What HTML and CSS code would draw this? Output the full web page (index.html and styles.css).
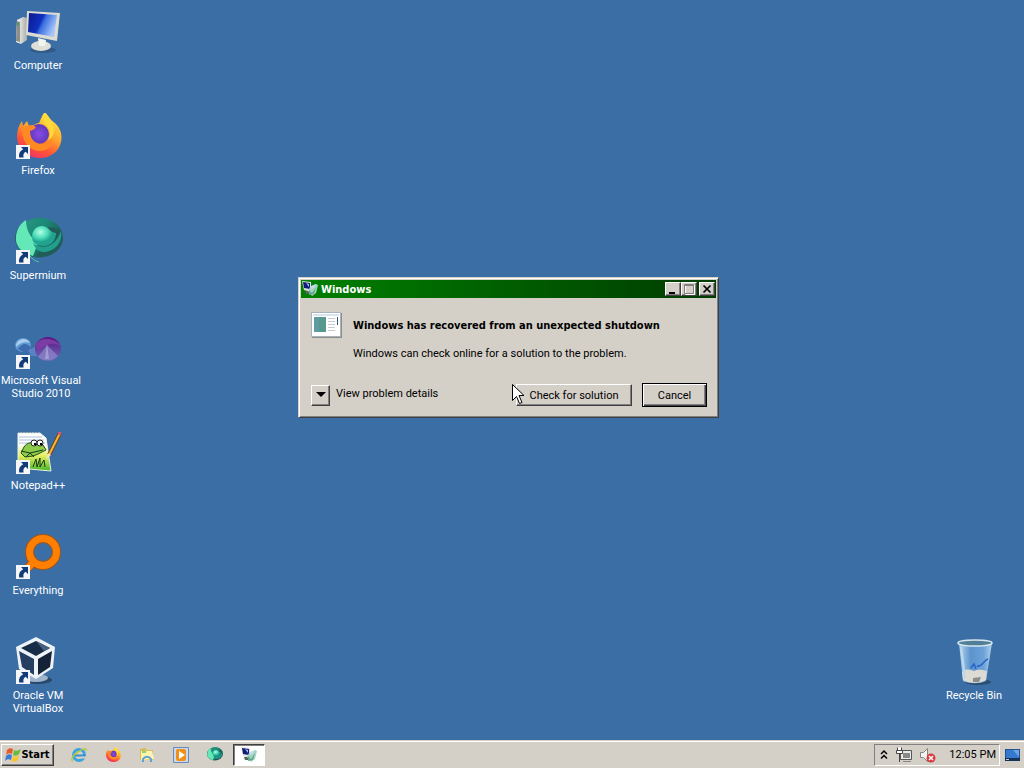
FILE: index.html
```html
<!DOCTYPE html>
<html lang="en">
<head>
<meta charset="utf-8">
<title>Desktop</title>
<link rel="stylesheet" href="styles.css">
</head>
<body>
<svg class="defs" aria-hidden="true">
  <defs>
    <linearGradient id="screen" x1="0" y1="0" x2="1" y2="0.4"><stop offset="0" stop-color="#0a1a8a"/><stop offset=".5" stop-color="#1030c0"/><stop offset=".6" stop-color="#3a6ee0"/><stop offset="1" stop-color="#a4c4f8"/></linearGradient>
    <linearGradient id="metal" x1="0" y1="0" x2="1" y2="0"><stop offset="0" stop-color="#fff"/><stop offset="1" stop-color="#a9aca6"/></linearGradient>
    <linearGradient id="flame" x1=".8" y1="0" x2=".3" y2="1"><stop offset="0" stop-color="#fff04a"/><stop offset=".45" stop-color="#ffa42c"/><stop offset=".75" stop-color="#ff5338"/><stop offset="1" stop-color="#f0306a"/></linearGradient>
    <radialGradient id="violet"><stop offset="0" stop-color="#8a4ae8"/><stop offset="1" stop-color="#5e3ab8"/></radialGradient>
    <linearGradient id="teal" x1="0" y1="0" x2="1" y2=".7"><stop offset="0" stop-color="#2c9c80"/><stop offset=".5" stop-color="#1c8878"/><stop offset="1" stop-color="#1c4a4a"/></linearGradient>
    <radialGradient id="mint" cx=".35" cy=".3"><stop offset="0" stop-color="#b4ffe4"/><stop offset=".6" stop-color="#4cdcb8"/><stop offset="1" stop-color="#20a490"/></radialGradient>
    <linearGradient id="purple" x1="0" y1="0" x2="0" y2="1"><stop offset="0" stop-color="#5c1484"/><stop offset="1" stop-color="#6c6cb8"/></linearGradient>
    <linearGradient id="paper" x1="0" y1="0" x2="0" y2="1"><stop offset=".3" stop-color="#fff"/><stop offset=".6" stop-color="#e4ee60"/><stop offset="1" stop-color="#46b828"/></linearGradient>
    <linearGradient id="glass" x1="0" y1="0" x2="1" y2="0"><stop offset="0" stop-color="#b8d8f0"/><stop offset=".35" stop-color="#5c94cc"/><stop offset=".75" stop-color="#6ca2d8"/><stop offset="1" stop-color="#b4d0e8"/></linearGradient>
    <symbol id="shortcut" viewBox="0 0 14 14"><path fill="#f4f6fa" d="M0 0h14v14H0z"/><path fill="#123c78" d="M5 2h7v7L9.700 6.800C7.500 8 7 9.500 7.600 12.600H3.200C2.400 8.800 3.900 6 7.200 4.300z"/></symbol>
    <symbol id="firefox" viewBox="0 0 48 48"><path fill="url(#flame)" d="M31-1c2 3 4 5 6 8 8 5 12 13 10 22-2 10-11 16-21 16C13 45 3 36 3 23 3 17 5 12 8 8l1 5 4-5 2 5 5-1c1-1 3-2 5-2 2-4 3-8 6-11z"/><circle cx="25" cy="21" r="10" fill="url(#violet)"/><path fill="#ff8a24" d="M8 16c4-4 9-5 14-2-1 2-3 3-6 4 0 8 5 13 12 13 5 0 8-3 10-7 1 9-4 14-12 14C15 38 8 28 8 16z"/><path fill="#ffd93c" d="M31-1c-4 5-3 9 1 13 5 5 5 11 2 15 6-2 8-10 3-20z"/></symbol>
    <symbol id="supermium" viewBox="0 0 48 40"><ellipse cx="24" cy="20" rx="24" ry="19.500" fill="#225c58"/><path fill="url(#teal)" d="M1 17C3 6 13 0 25 0c11 0 20 6 22 15-4-5-10-7-16-5-8 3-11 9-8 17 1 4 1 8-2 12C8 38-1 29 1 17z"/><path fill="#64e8b8" d="M1 19C2 10 6 5 11 2c0 8 3 17 12 23l-5 13C8 35 0 29 1 19z"/><path fill="#20a08c" d="M18 25c10 8 23 3 28-12 2 11-6 21-18 21-5 0-8-4-10-9z"/><path fill="url(#mint)" d="M17 19c0-8 7-13 14-10 4 2 4 5 10 6 0 8-6 13-12 13-7 0-12-3-12-9z"/></symbol>
    <symbol id="recovery" viewBox="0 0 16 16"><path fill="#e2e2dc" d="M0 0l9 1v10L2 9z"/><path fill="#101c78" d="M1 1l7 1v6L2 7z"/><path fill="#a8c0f0" d="M4 2l3 1v3z"/><path fill="#58625c" d="M3 10h6v3H4z"/><path fill="#a4d4c0" d="M8 6l6-3 2 1-2 8-4 3-4-5z"/><path fill="#60a88c" d="M7 9l3 3 4-6-2 7-5 1z"/><path fill="#c4dcec" d="M9 5l5-2-2 4-3 1z"/></symbol>
  </defs>
</svg>

<main class="desktop">
  <nav class="icons" aria-label="Desktop icons">
    <a class="icon" href="#computer">
      <svg class="art" viewBox="0 0 48 48"><path fill="url(#metal)" d="M3 12l6-3 4 1v22l-6 4-5-2z"/><path fill="#8c9088" d="M3 13l3 1v20l-4-1z"/><path fill="#3ea040" d="M3 15h2v2H3z"/><ellipse cx="29" cy="42" rx="13" ry="3" fill="#2b4e72" opacity=".6"/><ellipse cx="27" cy="38" rx="10" ry="5" fill="#dedfd8"/><path fill="#f4f4ee" d="M24 30l8 2-1 6h-6z"/><path fill="#dcdcd4" d="M13 3l33 2-3 28-31-6z"/><path fill="url(#screen)" d="M15 5l28 2-3 22-26-5z"/></svg>
      <span>Computer</span>
    </a>
    <a class="icon" href="#firefox">
      <svg class="art" viewBox="0 0 48 48"><use href="#firefox" width="48" height="48"/><use href="#shortcut" x="2" y="32" width="14" height="14"/></svg>
      <span>Firefox</span>
    </a>
    <a class="icon" href="#supermium">
      <svg class="art" viewBox="0 0 48 48"><use href="#supermium" x="1" y="0" width="48" height="40"/><path fill="none" stroke="#50c8a8" d="M16 38c2 3 5 5 9 6"/><use href="#shortcut" x="2" y="32" width="14" height="14"/></svg>
      <span>Supermium</span>
    </a>
    <a class="icon" href="#visual-studio">
      <svg class="art" viewBox="0 0 48 48"><ellipse cx="9" cy="22" rx="8" ry="7" fill="#5c9ad4"/><path fill="#a8ccec" d="M2 22c2-7 11-8 14-2-5-2-10 0-14 4z"/><path fill="#3c6cae" d="M4 26c4-6 9-7 13-1l-4 6z"/><path fill="#5c80c4" d="M14 27l9-4 4-5 3 14-7 1-6 0z"/><ellipse cx="34" cy="26" rx="13" ry="12" fill="url(#purple)"/><path fill="#7c3ca4" d="M21 22c6-8 18-8 26 1-8-4-15-3-22 5z"/><path fill="#8c84c8" d="M24 34l9-12 11 11c-5 5-14 6-20 1z" opacity=".75"/><path fill="#a49cd4" d="M33 21l2 15h-4z"/><use href="#shortcut" x="2" y="32" width="14" height="14"/></svg>
      <span class="long">Microsoft Visual Studio 2010</span>
    </a>
    <a class="icon" href="#notepad">
      <svg class="art" viewBox="0 0 48 48"><path fill="url(#paper)" stroke="#e9f2e4" d="M4 5h22l6 5 5 33-33-3z"/><path stroke="#52646e" stroke-dasharray="1 2" d="M5 4h21"/><path stroke="#adc0dc" d="M5 9h23M5 12h25M5 15h26"/><path fill="#8ccc48" stroke="#244c18" d="M10 19c3-5 9-5 12-3l7 1 3 5-8 4-5 2-8 1-4-4z"/><circle cx="20" cy="15" r="3" fill="#fff" stroke="#222"/><circle cx="26" cy="15" r="3" fill="#fff" stroke="#222"/><path d="M20 15h2v2h-2zM26 15h2v2h-2z"/><path stroke="#17361a" fill="none" d="M7 23l9 2 13-3M12 29l4-4 4 4M19 39l3-8 1 8 3-9v9l4-7 1 7"/><path stroke="#75441e" stroke-width="4" d="M46 5L35 27"/><path stroke="#f8b830" stroke-width="2" d="M46 5L35 27"/><path fill="#f5e2bd" d="M34 25l3 2-5 5z"/><path stroke="#d65d72" stroke-width="3" d="M46 4l-1 3"/><use href="#shortcut" x="2" y="32" width="14" height="14"/></svg>
      <span>Notepad++</span>
    </a>
    <a class="icon" href="#everything">
      <svg class="art" viewBox="0 0 48 48"><path stroke="#a85616" stroke-width="9" d="M20 28l-6 7"/><circle cx="29" cy="19" r="13.500" fill="none" stroke="#a0541c" stroke-width="9"/><path stroke="#ff8000" stroke-width="7" d="M21 27l-7 8"/><circle cx="29" cy="19" r="13.500" fill="none" stroke="#ff8000" stroke-width="7"/><use href="#shortcut" x="2" y="32" width="14" height="14"/></svg>
      <span>Everything</span>
    </a>
    <a class="icon" href="#virtualbox">
      <svg class="art" viewBox="0 0 48 48"><ellipse cx="24" cy="42" rx="14" ry="4" fill="#28486c"/><ellipse cx="22" cy="40" rx="12" ry="4" fill="#9eb4ca"/><path fill="#eef3f8" d="M22-1l19 10-2 21-17 11L5 31 2 9z"/><path fill="#182c48" d="M22 3l14 7-14 8L7 10z"/><path fill="#263e60" d="M5 13l15 8v16L8 29z"/><path fill="#142238" d="M38 13l-14 8v16l12-8z"/><path fill="#46607e" d="M22 3l14 7-6 3z"/><use href="#shortcut" x="2" y="32" width="14" height="14"/></svg>
      <span>Oracle VM VirtualBox</span>
    </a>
  </nav>

  <a class="icon" href="#recycle-bin">
    <svg class="art" viewBox="1 0 48 48"><ellipse cx="29" cy="44" rx="13" ry="3" fill="#2b4e72"/><path fill="url(#glass)" d="M10 5h33l-6 38c-6 3-17 3-23 0z"/><path fill="#dcdad4" d="M13 34c5-4 9-2 12-1 4-2 8-1 13 0l-1 9c-6 4-17 4-23 0z"/><path fill="#8c8c88" d="M24 40l8-1-2 5h-6z"/><path fill="none" stroke="#2562c8" stroke-width="1.500" d="M28 28c4 2 7-6 11-7M22 30l3-4 2 5"/><path stroke="#bcd8ee" stroke-width="2" d="M12 9l4 31"/><ellipse cx="26" cy="5" rx="17" ry="3" fill="#527e98" stroke="#d4e6ee" stroke-width="1.500"/></svg>
    <span>Recycle Bin</span>
  </a>

  <section class="dialog" role="dialog" aria-labelledby="dialog-title">
    <header class="titlebar">
      <svg class="small" viewBox="0 0 16 16"><use href="#recovery" width="16" height="16"/></svg>
      <h1 id="dialog-title">Windows</h1>
      <div class="controls">
        <button class="control" aria-label="Minimize"><svg viewBox="0 0 14 12"><path d="M3 9h6v2H3z"/></svg></button>
        <button class="control" aria-label="Maximize" disabled><svg viewBox="0 0 14 12"><path fill="none" stroke="#fff" d="M3.500 2.500h9v9h-9z"/><path fill="none" stroke="#808080" d="M2.500 1.500h9v9h-9zM2 2.500h10"/></svg></button>
        <button class="control close" aria-label="Close"><svg viewBox="0 0 14 12"><path fill="none" stroke="#000" stroke-width="1.700" d="M3.500 2.500l7 7M10.500 2.500l-7 7"/></svg></button>
      </div>
    </header>
    <div class="message">
      <svg class="program" viewBox="0 0 31 26"><path fill="#8c8c88" d="M1 1h30v25H1z"/><path fill="#fff" stroke="#a9b4bd" d="M.5.5h29v24H.5z"/><path fill="#d8e4ec" d="M2 2h26v2H2z"/><path fill="#559a8c" d="M3 5h12v15H3z"/><path fill="#6c9cba" d="M3 5h5v15H3z" opacity=".5"/><path stroke="#c5ccd4" d="M17 6.500h7M17 9.500h7M17 12.500h7M17 15.500h7M17 18.500h7"/><path fill="#2e5978" d="M26 5h1v8h-1z"/></svg>
      <div>
        <h2>Windows has recovered from an unexpected shutdown</h2>
        <p>Windows can check online for a solution to the problem.</p>
      </div>
    </div>
    <footer class="actions">
      <button class="button expand" id="details"><svg viewBox="0 0 10 6"><path d="M0 0h10L5 5z"/></svg></button>
      <label for="details">View problem details</label>
      <button class="button check">Check for solution</button>
      <button class="button cancel">Cancel</button>
    </footer>
  </section>

  <svg class="cursor" viewBox="0 0 12 21" aria-hidden="true"><path fill="#fff" stroke="#000" d="M.5.5v16l4-4 3 7 2.500-1-3-7h5z"/></svg>
</main>

<footer class="taskbar">
  <button class="start"><svg class="small" viewBox="0 0 16 16"><path fill="#e85a28" d="M2 3c2-2 4-2 6-1L7 7C5 6 3 6 1 8z"/><path fill="#6cba3c" d="M9 3c2 1 4 1 7-1l-2 5c-2 2-4 2-6 1z"/><path fill="#3c7cd8" d="M1 9c2-2 4-2 6-1l-1 5c-2-1-4-1-6 1z"/><path fill="#f8c430" d="M8 9c2 1 4 1 6-1l-1 5c-2 2-4 2-7 1z"/></svg>Start</button>
  <nav class="launch" aria-label="Quick launch">
    <a href="#ie" aria-label="Internet Explorer"><svg class="small" viewBox="0 0 16 16"><circle cx="8" cy="8" r="5.500" fill="none" stroke="#3ca4dc" stroke-width="3"/><path stroke="#348ccc" stroke-width="2" d="M4 8.500h10"/><path fill="#d4d0c8" d="M10 9.500h6v2h-6z"/><path fill="none" stroke="#b8c83c" stroke-width="1.500" d="M2 14c-3-1 0-6 5-9 5-4 9-4 8-1"/></svg></a>
    <a href="#firefox" aria-label="Firefox"><svg class="small" viewBox="0 0 16 16"><use href="#firefox" width="16" height="16"/></svg></a>
    <a href="#explorer" aria-label="Explorer"><svg class="small" viewBox="0 0 16 16"><path fill="#d8bd54" d="M1 2l5-1 2 2h6v10H1z"/><path fill="#fff3b0" d="M2 4h11l2 8-13 1z"/><path fill="#91d078" d="M3 4h4v2H3z"/><path fill="none" stroke="#5ca4d8" stroke-width="2" d="M4 15v-3c2-3 6-3 8 0v3"/></svg></a>
    <a href="#player" aria-label="Media Player"><svg class="small" viewBox="0 0 16 16"><path fill="#c8daf0" stroke="#6c88b8" d="M.5.5h15v15H.5z"/><rect x="3" y="2" width="10" height="12" rx="2" fill="#f09018"/><path fill="#fff" d="M6 4l6 4-6 4z"/></svg></a>
    <a href="#supermium" aria-label="Supermium"><svg class="small" viewBox="0 0 16 16"><use href="#supermium" width="16" height="14"/></svg></a>
  </nav>
  <button class="task" aria-label="Windows"><svg class="small" viewBox="0 0 16 16"><use href="#recovery" width="16" height="16"/></svg></button>
  <div class="tray">
    <button class="plain" aria-label="Show hidden icons"><svg viewBox="0 0 8 10"><path fill="none" stroke="#000" stroke-width="1.500" d="M1 4l3-3 3 3M1 8.500l3-3 3 3"/></svg></button>
    <svg class="small" viewBox="0 0 16 16" role="img" aria-label="Network"><path fill="#e9e9e6" stroke="#555" d="M4.500 3.500h11v9h-11z"/><path fill="#888" d="M7 6h7v5H7zM7 14h8v1H7z"/><path fill="#fff" stroke="#444" d="M1.500.5v3h4v-3M.5 3.500h6v3h-6zM3.500 7v8"/></svg>
    <svg class="small" viewBox="0 0 16 16" role="img" aria-label="Volume muted"><path fill="#f4f4f0" stroke="#858585" d="M.5 5.500h3l4-4v13l-4-4h-3z"/><circle cx="11" cy="11" r="4.500" fill="#d83c40"/><path stroke="#fff" stroke-width="1.500" d="M9 9l4 4M13 9l-4 4"/></svg>
    <time class="clock">12:05 PM</time>
  </div>
  <button class="plain" aria-label="Show desktop"><svg class="show" viewBox="0 0 15 12"><path fill="#24508c" d="M0 0h15v12H0z"/><path fill="#3678cc" d="M1 1h13v8H1z"/><path fill="#6ca4e4" d="M8 1h6v7z"/><path fill="#163258" d="M0 9h15v3H0z"/><path fill="#bdc9d6" d="M1 10h3v1H1z"/></svg></button>
</footer>
</body>
</html>
```
FILE: styles.css
```css
* { box-sizing: border-box; }

body {
  margin: 0;
  min-height: 100vh;
  display: flex;
  flex-direction: column;
  background: #3a6ea5;
  color: #000;
  font: 11px/13px Roboto, "Noto Sans", sans-serif;
}

button {
  margin: 0;
  padding: 0;
  font: inherit;
  color: inherit;
  display: flex;
  align-items: center;
  justify-content: center;
}

svg { display: block; flex: none; overflow: visible; }
.defs { position: absolute; width: 0; height: 0; }
.small { width: 16px; height: 16px; }

.desktop {
  position: relative;
  flex: 1;
  display: flex;
  justify-content: space-between;
  align-items: flex-end;
  padding: 0 12px 5px 0;
}

.icons { align-self: flex-start; }

.icon {
  width: 76px;
  height: 105px;
  padding-top: 8px;
  display: flex;
  flex-direction: column;
  align-items: center;
  gap: 3px;
  color: #fff;
  text-align: center;
  text-decoration: none;
}

/* A long name may run past the right side of its cell. */
.long { margin-right: -6px; }
.art { width: 48px; height: 48px; }

.dialog {
  position: absolute;
  left: 298px;
  top: 277px;
  width: 421px;
  padding: 1px;
  background: #d4d0c8;
  border: 1px solid;
  border-color: #d4d0c8 #404040 #404040 #d4d0c8;
  box-shadow: inset 1px 1px #fff, inset -1px -1px #808080;
}

.titlebar {
  height: 18px;
  margin: 1px;
  padding: 0 1px;
  display: flex;
  align-items: center;
  gap: 3px;
  background: linear-gradient(90deg, #008000, #003c00);
  color: #fff;
}

h1, h2, .start {
  font: bold 11px/13px "DejaVu Sans Condensed", "Noto Sans", sans-serif;
}

h1, h2 { margin: 0; }
.controls { margin-left: auto; display: flex; }

.control {
  width: 16px;
  height: 14px;
  background: #d4d0c8;
  border: 1px solid;
  border-color: #fff #404040 #404040 #fff;
  box-shadow: inset -1px -1px #808080;
}

.control svg { width: 14px; height: 12px; }
.close { margin-left: 2px; }

.message {
  display: flex;
  gap: 11px;
  padding: 13px 11px 0;
}

.program { width: 31px; height: 26px; }
.message h2 { margin-top: 7px; }
.message p { margin: 15px 0 0; }

.actions {
  display: flex;
  align-items: center;
  padding: 23px 10px 9px 11px;
}

.actions label { margin: 0 auto 4px 6px; }

.button {
  height: 22px;
  background: #d4d0c8;
  border: 1px solid;
  border-color: #fff #404040 #404040 #fff;
  box-shadow: inset -1px -1px #808080;
}

.expand { width: 19px; height: 21px; }
.expand svg { width: 10px; height: 6px; }
.check { width: 116px; }

.cancel {
  width: 65px;
  height: 24px;
  margin-left: 10px;
  border-color: #000;
  box-shadow: inset 1px 1px #fff, inset -1px -1px #404040, inset -2px -2px #808080;
}

.cursor {
  position: absolute;
  left: 512px;
  top: 384px;
  width: 12px;
  height: 21px;
}

.taskbar {
  height: 28px;
  padding: 2px 4px 1px 1px;
  display: flex;
  align-items: center;
  background: #d4d0c8;
  box-shadow: inset 0 1px #d4d0c8, inset 0 2px #fff;
}

.start {
  width: 53px;
  height: 22px;
  background: #d4d0c8;
  border: 1px solid;
  border-color: #fff #404040 #404040 #fff;
  box-shadow: inset -1px -1px #808080;
}

.launch {
  display: flex;
  gap: 18px;
  padding: 0 10px 0 17px;
}

.task {
  width: 32px;
  height: 22px;
  background: #fff;
  border: 1px solid;
  border-color: #404040 #fff #fff #404040;
  box-shadow: inset 1px 1px #808080;
}

.tray {
  width: 126px;
  height: 22px;
  margin-left: auto;
  padding: 0 3px 0 5px;
  display: flex;
  align-items: center;
  gap: 8px;
  border: 1px solid;
  border-color: #808080 #fff #fff #808080;
}

.plain { background: none; border: 0; }
.tray .plain svg { width: 8px; height: 10px; }
.clock { margin-left: auto; white-space: nowrap; }
.show { width: 15px; height: 12px; margin-left: 5px; }
```
